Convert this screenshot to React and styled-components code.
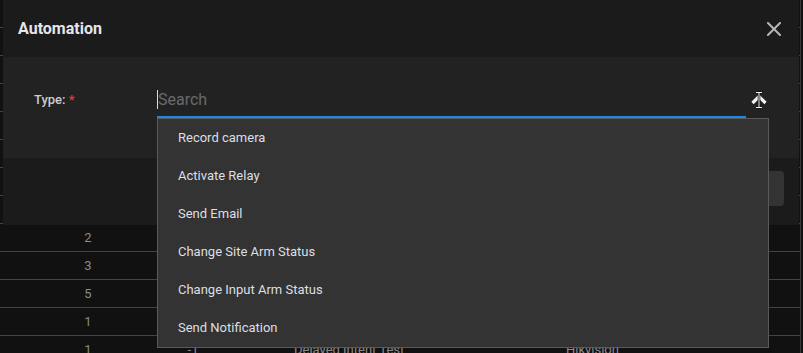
import styled, { createGlobalStyle } from "styled-components";

/* ---------- global ---------- */
const GlobalStyle = createGlobalStyle`
   html, body {
      margin: 0;
      padding: 0;
      background: #111111;
      font-family: Roboto, "Liberation Sans", sans-serif;
      overflow: hidden;
   }
`;

/* ---------- background table ---------- */
const Page = styled.div`
   position: relative;
   width: 803px;
   height: 353px;
   background: #111111;
   overflow: hidden;
`;

const Table = styled.div`
   display: flex;
   flex-direction: column;
   width: 800px;
   border-right: 1px solid #3a3a3a;
`;

const Row = styled.div`
   display: grid;
   grid-template-columns: 176px 34px 272px 1fr;
   height: 27px;
   border-bottom: 1px solid #444;
   align-items: center;
   font-size: 13px;
   color: #8a8a8a;
`;

const Cell = styled.div`
   text-align: ${({ align }) => align || "center"};
   padding-left: ${({ pad }) => pad || 0}px;
   white-space: nowrap;
`;

/* ---------- modal ---------- */
const Modal = styled.div`
   position: absolute;
   left: 3px;
   top: 0;
   width: 796px;
   display: flex;
   flex-direction: column;
`;

const Header = styled.div`
   height: 57px;
   background: #1b1b1b;
   display: flex;
   align-items: center;
   justify-content: space-between;
   padding: 0 17px 0 15px;
`;

const Title = styled.h2`
   margin: 0;
   font-size: 16px;
   font-weight: 700;
   color: #e4e6ea;
`;

const CloseButton = styled.button`
   border: none;
   background: none;
   padding: 0;
   width: 16px;
   height: 16px;
   display: flex;
   align-items: center;
   justify-content: center;
   cursor: pointer;
`;

const Body = styled.div`
   height: 101px;
   background: #222222;
   display: flex;
   align-items: flex-start;
   padding: 25px 0 0 31px;
   box-sizing: border-box;
`;

const Label = styled.label`
   width: 123px;
   padding-top: 10px;
   font-size: 13px;
   font-weight: 500;
   color: #c9ccd1;
`;

const Required = styled.span`
   color: #e53935;
`;

const Field = styled.div`
   position: relative;
   display: flex;
   align-items: center;
   width: 589px;

   // text caret shown in the focused search box
   &::before {
      content: "";
      position: absolute;
      left: 0;
      top: 8px;
      width: 1px;
      height: 19px;
      background: #dcdcdc;
   }
`;

const Input = styled.input`
   width: 100%;
   height: 36px;
   box-sizing: border-box;
   background: transparent;
   border: none;
   border-bottom: 2px solid #1e88e5;
   padding: 0 0 0 1px;
   font-family: Roboto, "Liberation Sans", sans-serif;
   font-size: 16px;
   color: #ddd;
   outline: none;

   &::placeholder {
      color: #6a6a6a;
   }
`;

const Toggle = styled.div`
   position: absolute;
   right: -22px;
   top: 9px;
   width: 18px;
   height: 18px;
`;

const Footer = styled.div`
   height: 67px;
   background: #1b1b1b;
   display: flex;
   align-items: center;
   justify-content: flex-end;
   padding: 0 15px 6px 0;
   box-sizing: border-box;
`;

const FooterButton = styled.button`
   height: 35px;
   min-width: 80px;
   border: none;
   border-radius: 4px;
   background: #333333;
   color: #ddd;
   font-size: 13px;
   font-family: Roboto, "Liberation Sans", sans-serif;
`;

/* ---------- dropdown ---------- */
const Menu = styled.ul`
   position: absolute;
   left: 157px;
   top: 118px;
   width: 612px;
   margin: 0;
   padding: 0;
   list-style: none;
   background: #333333;
   border: 1px solid #5a5a5a;
   box-sizing: border-box;
`;

const MenuItem = styled.li`
   height: 38px;
   box-sizing: border-box;
   display: flex;
   align-items: center;
   padding: 0 0 2px 20px;
   font-size: 13px;
   color: #dcdfe3;
   cursor: pointer;
`;

const rows = [
   { id: 2 },
   { id: 3 },
   { id: 5 },
   { id: 1 },
   { id: 1, delay: "-1", name: "Delayed Intent Test", brand: "Hikvision" },
];

const options = [
   "Record camera",
   "Activate Relay",
   "Send Email",
   "Change Site Arm Status",
   "Change Input Arm Status",
   "Send Notification",
];

function App() {
   return (
      <>
         <GlobalStyle />
         <Page>
            <Table>
               {Array.from({ length: 8 }).map((_, i) => (
                  <Row key={"e" + i} />
               ))}
               {rows.map((r, i) => (
                  <Row key={i}>
                     <Cell>{r.id}</Cell>
                     <Cell>{r.delay}</Cell>
                     <Cell align="left" pad={84}>
                        {r.name}
                     </Cell>
                     <Cell align="left" pad={84}>
                        {r.brand}
                     </Cell>
                  </Row>
               ))}
            </Table>

            <Modal>
               <Header>
                  <Title>Automation</Title>
                  <CloseButton aria-label="close">
                     <svg width="14" height="14" viewBox="0 0 14 14">
                        <path
                           d="M1 1 L13 13 M13 1 L1 13"
                           stroke="#b4b6ba"
                           strokeWidth="2"
                           strokeLinecap="square"
                        />
                     </svg>
                  </CloseButton>
               </Header>
               <Body>
                  <Label>
                     Type: <Required>*</Required>
                  </Label>
                  <Field>
                     <Input placeholder="Search" />
                     <Toggle>
                        <svg width="18" height="18" viewBox="0 0 18 18">
                           <path
                              d="M2.5 12 L9 5.5 L15.5 12"
                              stroke="#f2f2f2"
                              strokeWidth="3.2"
                              fill="none"
                           />
                           <path
                              d="M6 1.5 H12 M9 1.5 V16.5 M6 16.5 H12"
                              stroke="#111"
                              strokeWidth="2.6"
                              fill="none"
                           />
                           <path
                              d="M6 1.5 H12 M9 1.5 V16.5 M6 16.5 H12"
                              stroke="#f2f2f2"
                              strokeWidth="1"
                              fill="none"
                           />
                        </svg>
                     </Toggle>
                  </Field>
               </Body>
               <Footer>
                  <FooterButton>Save</FooterButton>
               </Footer>
            </Modal>

            <Menu>
               {options.map((o) => (
                  <MenuItem key={o}>{o}</MenuItem>
               ))}
            </Menu>
         </Page>
      </>
   );
}

export default App;
